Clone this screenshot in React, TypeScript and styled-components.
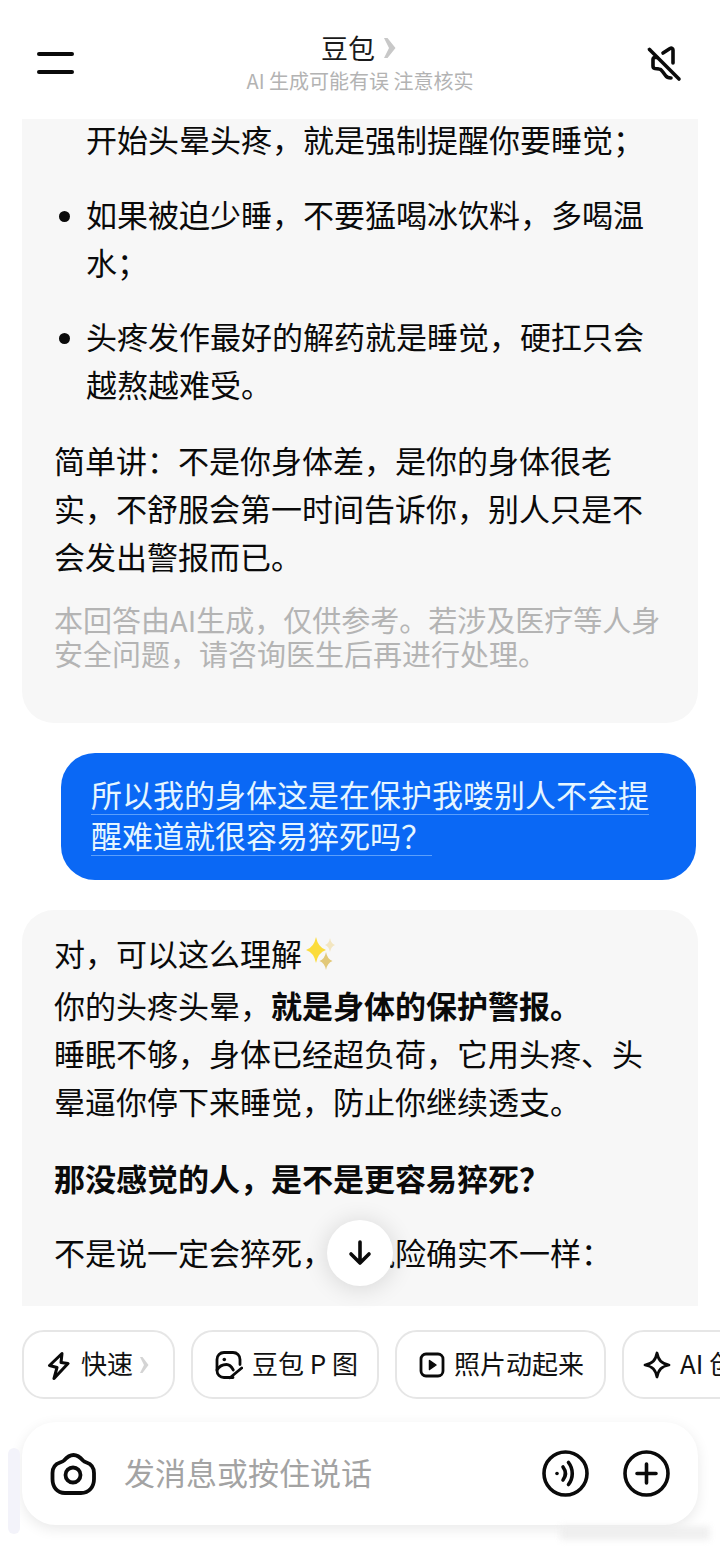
import styled, { createGlobalStyle } from "styled-components"

const GlobalStyle = createGlobalStyle`
    html, body {
        margin: 0;
        padding: 0;
        background: #fff;
    }
    * {
        box-sizing: border-box;
    }
`

const Page = styled.div`
    position: relative;
    width: 720px;
    height: 1547px;
    overflow: hidden;
    display: flex;
    flex-direction: column;
    background: #fff;
    color: #0a0a0a;
    font-family: "Noto Sans CJK SC", "Noto Sans", sans-serif;
`

const Header = styled.header`
    height: 119px;
    flex: none;
    display: flex;
    align-items: flex-start;
    justify-content: space-between;
    padding: 27px 36px 0 37px;
`

const Burger = styled.div`
    width: 37px;
    margin-top: 25px;
    display: flex;
    flex-direction: column;
    gap: 14px;
`

const BurgerBar = styled.span`
    display: block;
    height: 4px;
    border-radius: 2px;
    background: #0a0a0a;
`

const HeaderCenter = styled.div`
    display: flex;
    flex-direction: column;
    align-items: center;
`

const TitleRow = styled.div`
    display: flex;
    align-items: center;
    gap: 8px;
    height: 42px;
    margin-right: 3px;
    font-size: 27px;
    line-height: 42px;
    color: #1a1a1a;
`

const Subtitle = styled.div`
    font-size: 20px;
    line-height: 24px;
    color: #b3b3b3;
`

const MuteButton = styled.div`
    width: 38px;
    height: 38px;
    margin-top: 17px;
`

const Chat = styled.main`
    flex: none;
    height: 1187px;
    padding: 0 22px;
    overflow: hidden;
    display: flex;
    flex-direction: column;
    gap: 30px;
`

const AnswerCard = styled.section<{ $clipped: "top" | "bottom" }>`
    flex: ${({ $clipped }) => ($clipped === "top" ? "none" : "1 0 auto")};
    width: 676px;
    background: #f7f7f7;
    font-size: 31px;
    line-height: 48px;
    padding: ${({ $clipped }) => ($clipped === "top" ? "0 0 53px 32px" : "20px 0 0 32px")};
    border-radius: ${({ $clipped }) => ($clipped === "top" ? "0 0 32px 32px" : "32px 32px 0 0")};
`

const BulletList = styled.ul`
    margin: -4px 0 0;
    padding: 0;
    list-style: none;
    display: flex;
    flex-direction: column;
    gap: 26.5px;
`

const BulletItem = styled.li`
    width: 590px;
    display: flex;
`

const BulletDot = styled.span<{ $hidden?: boolean }>`
    flex: none;
    width: 11px;
    height: 11px;
    margin: 21px 16px 0 5px;
    border-radius: 50%;
    background: ${({ $hidden }) => ($hidden ? "transparent" : "#0a0a0a")};
`

const Para = styled.p<{ $gap?: number }>`
    width: 590px;
    margin: ${({ $gap }) => $gap ?? 0}px 0 0;
`

const Strong = styled.strong`
    font-weight: 700;
`

const GreetingLine = styled.div`
    display: flex;
    align-items: center;
    height: 52px;
    margin: -3px 0 2px;
`

const Sparkles = styled.svg`
    width: 32px;
    height: 36px;
    margin-left: 4px;
`

const Note = styled.p`
    width: 612px;
    margin: 22px 0 0;
    font-size: 29px;
    line-height: 34px;
    color: #b4b4b4;
`

const UserBubble = styled.section`
    flex: none;
    width: 635px;
    height: 127px;
    margin-left: 39px;
    padding: 20px 30px 0;
    border-radius: 34px;
    background: #0a68f5;
    color: #e6f6ff;
    font-size: 31px;
    line-height: 41px;
`

const UserText = styled.span`
    display: block;
    text-decoration: underline;
    text-decoration-color: #5b9ffb;
    text-decoration-thickness: 1px;
    text-underline-offset: 7px;
`

const ScrollDown = styled.div`
    position: absolute;
    left: 327px;
    top: 1220px;
    width: 66px;
    height: 66px;
    border-radius: 50%;
    background: #fff;
    box-shadow: 0 2px 24px rgba(0, 0, 0, 0.14);
    display: flex;
    align-items: center;
    justify-content: center;
`

const ChipRow = styled.nav`
    flex: none;
    display: flex;
    gap: 16px;
    padding: 24px 0 0 22px;
    width: 900px;
`

const Chip = styled.div<{ $width: number }>`
    flex: none;
    width: ${({ $width }) => $width}px;
    height: 69px;
    display: flex;
    align-items: center;
    gap: 9px;
    padding-left: 22px;
    border: 2px solid #e6e6e6;
    border-radius: 22px;
    background: #fff;
    font-size: 26px;
    color: #111;
    white-space: nowrap;
`

const ChipLabel = styled.span`
    margin-bottom: 4px;
`

const SparkIcon = styled.svg`
    margin-left: -3px;
`

const ChipArrow = styled.svg`
    width: 10px;
    height: 18px;
    margin-left: -3px;
`

const InputBar = styled.div`
    flex: none;
    width: 676px;
    height: 103px;
    margin: 23px 0 0 22px;
    padding: 0 28px;
    display: flex;
    align-items: center;
    border-radius: 34px;
    background: #fff;
    box-shadow: 0 4px 14px rgba(0, 0, 0, 0.09);
`

const Placeholder = styled.span`
    flex: 1;
    margin: 0 0 4px 28px;
    font-size: 31px;
    color: #a3a3a3;
`

const RoundIcons = styled.div`
    display: flex;
    gap: 34px;
`

const SideSliver = styled.div`
    position: absolute;
    left: 8px;
    top: 1448px;
    width: 12px;
    height: 86px;
    border-radius: 6px;
    background: #f3f3fa;
`

const Watermark = styled.div`
    position: absolute;
    left: 560px;
    top: 1526px;
    width: 150px;
    height: 14px;
    background: #ececec;
    filter: blur(3px);
    opacity: 0.8;
`

const Stroke = { fill: "none", stroke: "#0a0a0a", strokeLinecap: "round", strokeLinejoin: "round" } as const

// four pointed star around a centre, rx and ry are the arm lengths
const starPath = (cx: number, cy: number, rx: number, ry: number): string => {
    const kx = rx * 0.2
    const ky = ry * 0.2
    return `M${cx} ${cy - ry}Q${cx + kx} ${cy - ky} ${cx + rx} ${cy}Q${cx + kx} ${cy + ky} ${cx} ${cy + ry}Q${cx - kx} ${cy + ky} ${cx - rx} ${cy}Q${cx - kx} ${cy - ky} ${cx} ${cy - ry}z`
}

const App = (): JSX.Element => {
    return (
        <>
            <GlobalStyle />
            <Page>
                <Header>
                    <Burger>
                        <BurgerBar />
                        <BurgerBar />
                    </Burger>
                    <HeaderCenter>
                        <TitleRow>
                            豆包
                            <svg width="13" height="22" viewBox="0 0 13 22">
                                <path d="M1 1h3.500l8 10-8 10H1l5-10z" fill="#c8c8c8" />
                            </svg>
                        </TitleRow>
                        <Subtitle>AI 生成可能有误 注意核实</Subtitle>
                    </HeaderCenter>
                    <MuteButton>
                        <svg width="38" height="38" viewBox="0 0 38 38" {...Stroke} strokeWidth="3.6">
                            <path d="M3.500 5.500L33 35" />
                            <path d="M17 9l7-4.500c1.500-.8 3-.2 3 1.500v13" />
                            <path d="M11 13.500H9c-1.200 0-2 .8-2 2V22c0 1.500.8 2.300 2 2.500l4 .5c1.500 0 2.500 1 3.500 2.500l3 4c1 1.500 3 2.500 5.500 2.500" />
                        </svg>
                    </MuteButton>
                </Header>

                <Chat>
                    <AnswerCard $clipped="top">
                        <BulletList>
                            <BulletItem>
                                <BulletDot $hidden />
                                <div>开始头晕头疼，就是强制提醒你要睡觉；</div>
                            </BulletItem>
                            <BulletItem>
                                <BulletDot />
                                <div>如果被迫少睡，不要猛喝冰饮料，多喝温水；</div>
                            </BulletItem>
                            <BulletItem>
                                <BulletDot />
                                <div>头疼发作最好的解药就是睡觉，硬扛只会越熬越难受。</div>
                            </BulletItem>
                        </BulletList>
                        <Para $gap={28}>简单讲：不是你身体差，是你的身体很老实，不舒服会第一时间告诉你，别人只是不会发出警报而已。</Para>
                        <Note>本回答由AI生成，仅供参考。若涉及医疗等人身安全问题，请咨询医生后再进行处理。</Note>
                    </AnswerCard>

                    <UserBubble>
                        <UserText>所以我的身体这是在保护我喽别人不会提醒难道就很容易猝死吗？</UserText>
                    </UserBubble>

                    <AnswerCard $clipped="bottom">
                        <GreetingLine>
                            对，可以这么理解
                            <Sparkles viewBox="0 0 32 36">
                                <path d={starPath(10, 15, 10, 13)} fill="#fbdc3c" />
                                <path d={starPath(24, 10, 5, 7)} fill="#f3e6c0" />
                                <path d={starPath(20, 26, 6.5, 9)} fill="#e2c878" />
                            </Sparkles>
                        </GreetingLine>
                        <Para>
                            你的头疼头晕，<Strong>就是身体的保护警报。</Strong>
                        </Para>
                        <Para>睡眠不够，身体已经超负荷，它用头疼、头晕逼你停下来睡觉，防止你继续透支。</Para>
                        <Para $gap={29}>
                            <Strong>那没感觉的人，是不是更容易猝死？</Strong>
                        </Para>
                        <Para $gap={26}>不是说一定会猝死，但风险确实不一样：</Para>
                    </AnswerCard>
                </Chat>

                <ScrollDown>
                    <svg width="30" height="30" viewBox="0 0 30 30" {...Stroke} strokeWidth="3.6">
                        <path d="M15 4v21M6 16l9 9 9-9" />
                    </svg>
                </ScrollDown>

                <ChipRow>
                    <Chip $width={153}>
                        <svg width="26" height="30" viewBox="0 0 26 30" {...Stroke} strokeWidth="3">
                            <path d="M16 3.500L3.500 15.500l7.500 2-3 11 14-15-7-1z" />
                        </svg>
                        <ChipLabel>快速</ChipLabel>
                        <ChipArrow viewBox="0 0 10 18">
                            <path d="M1 1h2.500l6 8-6 8H1l4-8z" fill="#d4d4d4" />
                        </ChipArrow>
                    </Chip>
                    <Chip $width={188}>
                        <svg width="28" height="30" viewBox="0 0 28 30" {...Stroke} strokeWidth="2.8">
                            <path d="M18 27.500H9c-4 0-7-3-7-7V9.500c0-4 3-7 7-7h9c4 0 7 3 7 7v5" />
                            <path d="M2 20c2-3.500 6-5.500 9.500-5.500 3 0 5 2 6.800 5.500" />
                            <path d="M26.700 18L15 27.800" />
                            <circle cx="9.300" cy="9.500" r="1.800" fill="#0a0a0a" stroke="none" />
                        </svg>
                        <ChipLabel>豆包 P 图</ChipLabel>
                    </Chip>
                    <Chip $width={211}>
                        <svg width="26" height="26" viewBox="0 0 26 26" {...Stroke} strokeWidth="2.8">
                            <rect x="2" y="2" width="22" height="22" rx="5" />
                            <path d="M10.500 8.500l6.500 4.500-6.500 4.500z" fill="#0a0a0a" strokeWidth="1.5" />
                        </svg>
                        <ChipLabel>照片动起来</ChipLabel>
                    </Chip>
                    <Chip $width={200}>
                        <SparkIcon width="28" height="28" viewBox="0 0 28 28" {...Stroke} strokeWidth="2.8">
                            <path d="M14 2c1.500 7.500 4.500 10.500 12 12-7.500 1.500-10.500 4.500-12 12-1.500-7.500-4.500-10.500-12-12 7.500-1.500 10.500-4.500 12-12z" />
                        </SparkIcon>
                        <ChipLabel>AI 创作</ChipLabel>
                    </Chip>
                </ChipRow>

                <InputBar>
                    <svg width="46" height="42" viewBox="0 0 46 42" {...Stroke} strokeWidth="3.8">
                        <path d="M14 7.500C17 4 20 2 23.500 2S30 4 33 7.500c1 1 2 1.500 3.500 2C41 11 44 15 44 20v6c0 8-5 14-13 14H15C7 40 2.500 34 2.500 26v-6c0-5 3-9 7.500-10.500 1.500-.5 3-1 4-2z" />
                        <circle cx="23" cy="22" r="7.5" />
                    </svg>
                    <Placeholder>发消息或按住说话</Placeholder>
                    <RoundIcons>
                        <svg width="47" height="47" viewBox="0 0 47 47" {...Stroke} strokeWidth="3.6">
                            <circle cx="23.500" cy="23.500" r="21.500" />
                            <circle cx="15" cy="23.500" r="1.800" fill="#0a0a0a" stroke="none" />
                            <path d="M21 17c3 4 3 9 0 13" />
                            <path d="M26.500 12.500c5 6.500 5 15.500 0 22" />
                        </svg>
                        <svg width="47" height="47" viewBox="0 0 47 47" {...Stroke} strokeWidth="3.6">
                            <circle cx="23.500" cy="23.500" r="21.500" />
                            <path d="M23.500 14v19M14 23.500h19" />
                        </svg>
                    </RoundIcons>
                </InputBar>

                <SideSliver />
                <Watermark />
            </Page>
        </>
    )
}

export default App
